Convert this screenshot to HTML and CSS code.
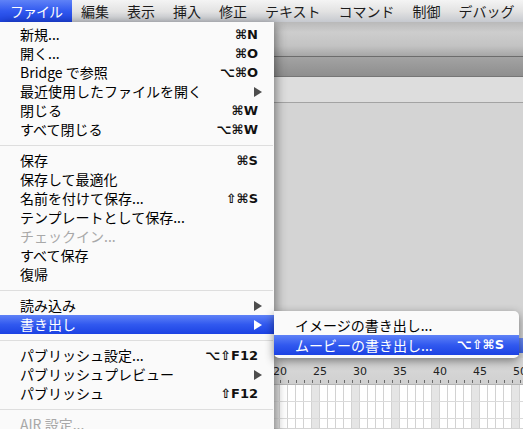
FILE: index.html
```html
<!DOCTYPE html>
<html lang="ja">
<head>
<meta charset="utf-8">
<title>ファイル メニュー</title>
<link rel="stylesheet" href="styles.css">
</head>
<body>
<div class="screen">
  <div class="menubar">
    <span class="mb-item active">ファイル</span>
    <span class="mb-item">編集</span>
    <span class="mb-item">表示</span>
    <span class="mb-item">挿入</span>
    <span class="mb-item">修正</span>
    <span class="mb-item">テキスト</span>
    <span class="mb-item">コマンド</span>
    <span class="mb-item">制御</span>
    <span class="mb-item">デバッグ</span>
  </div>

  <div class="window">
    <div class="win-top"></div>
    <div class="win-bar"></div>
    <div class="panel-head"></div>
    <div class="panel-body">
      <div class="layer-sel"></div>
    </div>
    <div class="ruler">
      <div class="ruler-nums">
        <span>20</span><span>25</span><span>30</span><span>35</span><span>40</span><span>45</span><span>50</span>
      </div>
      <div class="ticks"></div>
    </div>
    <div class="frames">
      <div class="frame-row"></div>
      <div class="frame-row"></div>
    </div>
  </div>

  <div class="menu">
    <div class="item"><span class="label">新規...</span><span class="key">⌘N</span></div>
    <div class="item"><span class="label">開く...</span><span class="key">⌘O</span></div>
    <div class="item"><span class="label">Bridge で参照</span><span class="key">⌥⌘O</span></div>
    <div class="item"><span class="label">最近使用したファイルを開く</span><span class="arrow"></span></div>
    <div class="item"><span class="label">閉じる</span><span class="key">⌘W</span></div>
    <div class="item"><span class="label">すべて閉じる</span><span class="key">⌥⌘W</span></div>
    <div class="sep"></div>
    <div class="item"><span class="label">保存</span><span class="key">⌘S</span></div>
    <div class="item"><span class="label">保存して最適化</span></div>
    <div class="item"><span class="label">名前を付けて保存...</span><span class="key">⇧⌘S</span></div>
    <div class="item"><span class="label">テンプレートとして保存...</span></div>
    <div class="item disabled"><span class="label">チェックイン...</span></div>
    <div class="item"><span class="label">すべて保存</span></div>
    <div class="item"><span class="label">復帰</span></div>
    <div class="sep"></div>
    <div class="item"><span class="label">読み込み</span><span class="arrow"></span></div>
    <div class="item hl"><span class="label">書き出し</span><span class="arrow"></span></div>
    <div class="sep"></div>
    <div class="item"><span class="label">パブリッシュ設定...</span><span class="key">⌥⇧F12</span></div>
    <div class="item"><span class="label">パブリッシュプレビュー</span><span class="arrow"></span></div>
    <div class="item"><span class="label">パブリッシュ</span><span class="key">⇧F12</span></div>
    <div class="sep"></div>
    <div class="item disabled"><span class="label">AIR 設定...</span></div>
  </div>

  <div class="submenu">
    <div class="sub-item"><span class="label">イメージの書き出し...</span></div>
    <div class="sub-item hl"><span class="label">ムービーの書き出し...</span><span class="key">⌥⇧⌘S</span></div>
  </div>
</div>
</body>
</html>
```

FILE: styles.css
```css
html, body {
  margin: 0;
  padding: 0;
  background: #d4d4d4;
}

.screen {
  position: relative;
  width: 523px;
  height: 429px;
  overflow: hidden;
  font-family: "Noto Sans CJK JP", "DejaVu Sans", sans-serif;
}

/* ---------- menu bar ---------- */
.menubar {
  display: flex;
  height: 22px;
  background: linear-gradient(#f4f4f4, #e3e3e3 50%, #c6c9cf);
  white-space: nowrap;
}

.mb-item {
  padding: 0 9px;
  font-size: 14px;
  line-height: 22px;
  color: #1c1c1c;
}

.mb-item.active {
  padding: 0 10px;
  letter-spacing: -1px;
  color: #fff;
  background: linear-gradient(#5f82f7, #3159ef 50%, #1d43e2);
}

/* ---------- window behind ---------- */
.window {
  display: flex;
  flex-direction: column;
}

.win-top {
  height: 34px;
  background: linear-gradient(#b9b9b9, #cdcdcd 30%, #c3c3c3 70%, #a6a6a6);
  border-bottom: 1px solid #6c6c6c;
}

.win-bar {
  height: 19px;
  background: linear-gradient(#a3a3a3, #8e8e8e);
  border-bottom: 1px solid #767676;
}

.panel-head {
  height: 25px;
  background: #dddddd;
  border-bottom: 1px solid #a3a3a3;
}

.panel-body {
  position: relative;
  height: 255px;
  background: #d4d4d4;
}

.layer-sel {
  position: absolute;
  right: 0;
  top: 235px;
  width: 20px;
  height: 15px;
  background: linear-gradient(#6f8ff4, #3d63e8);
}

.ruler {
  height: 27px;
  background: linear-gradient(#dadada, #d0d0d0);
  border-bottom: 1px solid #b4b4b4;
  box-sizing: border-box;
  padding-top: 8px;
}

.ruler-nums {
  display: flex;
  padding-left: 273px;
  font-family: "DejaVu Sans", sans-serif;
  font-size: 11px;
  line-height: 12px;
  color: #222;
}

.ruler-nums span {
  flex: 0 0 40px;
}

.ticks {
  height: 3px;
  margin-top: 2px;
  background-image: repeating-linear-gradient(to right, #6a6a6a 0 1px, transparent 1px 8px);
  background-position: 272px 0;
}

.frames {
  height: 43px;
  background-color: #fff;
  background-image:
    repeating-linear-gradient(to right, transparent 0 7px, #d2d2d2 7px 8px),
    repeating-linear-gradient(to right, #e5e5e5 0 8px, transparent 8px 40px);
  background-position: 272px 0, 272px 0;
}

.frame-row {
  height: 16px;
  border-bottom: 1px solid #dadada;
}

/* ---------- dropdown menu ---------- */
.menu {
  position: absolute;
  left: 0;
  top: 22px;
  width: 274px;
  height: 420px;
  padding-top: 3px;
  box-sizing: border-box;
  background: #fafafa;
  box-shadow: 2px 2px 10px rgba(0, 0, 0, 0.45);
}

.item,
.sub-item {
  display: flex;
  align-items: center;
  height: 19px;
  padding: 0 16px 0 20px;
  font-size: 14px;
  line-height: 19px;
  color: #000;
  white-space: nowrap;
}

.label {
  flex: 1;
}

.key {
  font-family: "DejaVu Sans", sans-serif;
  font-size: 13px;
  font-weight: bold;
  color: #111;
}

.item.disabled {
  color: #a8a8a8;
}

.hl {
  color: #fff;
  background: linear-gradient(#5f82f7, #3159ef 50%, #1c42e3);
}

.hl .key {
  color: #fff;
}

.arrow {
  width: 0;
  height: 0;
  margin-right: -4px;
  border-left: 8px solid #4d4d4d;
  border-top: 5px solid transparent;
  border-bottom: 5px solid transparent;
}

.hl .arrow {
  border-left-color: #fff;
}

.sep {
  height: 1px;
  margin: 6px 1px 5px 0;
  background: #dedede;
}

/* ---------- submenu ---------- */
.submenu {
  position: absolute;
  left: 274px;
  top: 311px;
  width: 245px;
  padding: 4px 0 3px;
  background: #fafafa;
  border-radius: 0 5px 5px 5px;
  box-shadow: 0 3px 10px rgba(0, 0, 0, 0.45);
}

.sub-item {
  height: 20px;
  line-height: 20px;
  padding: 0 15px 0 21px;
}
```
